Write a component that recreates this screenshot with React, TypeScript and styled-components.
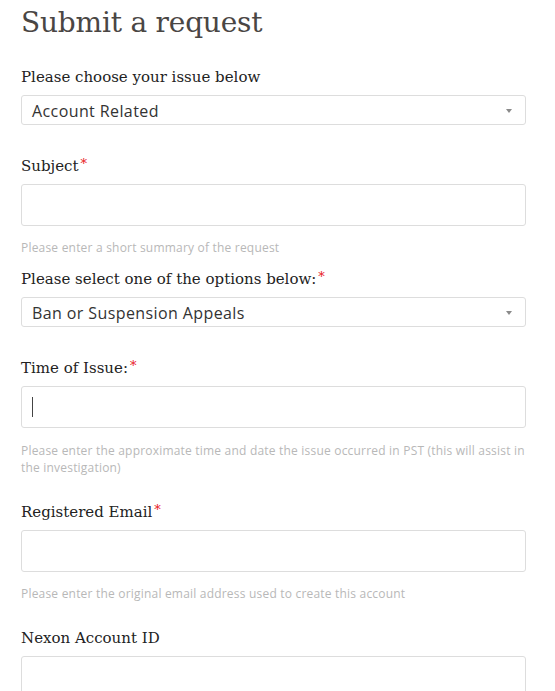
import React from "react";
import styled, { createGlobalStyle } from "styled-components";

const Global = createGlobalStyle`
  html, body { margin: 0; padding: 0; background: #fff; }
  body { font-family: "Open Sans", "Noto Sans", sans-serif; }
  * { box-sizing: border-box; }
`;

const Page = styled.div`
  padding: 0 29px 0 21px;
  width: 555px;
`;

const Title = styled.h1`
  margin: 0;
  height: 67px;
  padding-top: 4px;
  font-family: "DejaVu Serif", serif;
  font-weight: 400;
  font-size: 28px;
  line-height: 38px;
  color: #4a4644;
  letter-spacing: -0.2px;
`;

const Field = styled.div<{ $gap: number }>`
  display: flex;
  flex-direction: column;
  margin-bottom: ${(p) => p.$gap}px;
`;

const Label = styled.label`
  display: block;
  height: 20px;
  margin-bottom: 8px;
  font-family: "DejaVu Serif", serif;
  font-size: 15px;
  line-height: 20px;
  color: #222;
  letter-spacing: 0;
`;

const Req = styled.span`
  color: #e8141c;
  font-size: 13px;
  margin-left: 2px;
  position: relative;
  top: -3px;
`;

const SelectBox = styled.div`
  position: relative;
  height: 30px;
  border: 1px solid #ddd;
  border-radius: 3px;
  display: flex;
  align-items: center;
  padding: 2px 10px 0;
  font-size: 16px;
  letter-spacing: 0.4px;
  color: #333;
  background: #fff;
`;

const Arrow = styled.span`
  position: absolute;
  right: 13px;
  top: 50%;
  margin-top: -1px;
  width: 0;
  height: 0;
  border-left: 3px solid transparent;
  border-right: 3px solid transparent;
  border-top: 4px solid #8a8a8a;
`;

const InputWrap = styled.div`
  position: relative;
`;

const TextInput = styled.input`
  display: block;
  width: 100%;
  height: 42px;
  border: 1px solid #ddd;
  border-radius: 3px;
  padding: 0 10px;
  font-family: "Open Sans", sans-serif;
  font-size: 15px;
  color: #333;
  background: #fff;
  outline: none;
`;

const Caret = styled.span`
  position: absolute;
  left: 11px;
  top: 11px;
  width: 1px;
  height: 20px;
  background: #444;
`;

const Hint = styled.p<{ $top: number }>`
  margin: ${(p) => p.$top}px 0 0;
  font-size: 12px;
  letter-spacing: 0.2px;
  line-height: 17px;
  color: #b8b8b8;
`;

type F = {
  label: string;
  req?: boolean;
  kind: "select" | "input";
  value?: string;
  hint?: string;
  hintTop?: number;
  gap: number;
  caret?: boolean;
};

const fields: F[] = [
  { label: "Please choose your issue below", kind: "select", value: "Account Related", gap: 31 },
  { label: "Subject", req: true, kind: "input", hint: "Please enter a short summary of the request", hintTop: 13, gap: 13 },
  { label: "Please select one of the options below:", req: true, kind: "select", value: "Ban or Suspension Appeals", gap: 31 },
  {
    label: "Time of Issue:",
    req: true,
    kind: "input",
    caret: true,
    hint: "Please enter the approximate time and date the issue occurred in PST (this will assist in the investigation)",
    hintTop: 14,
    gap: 26,
  },
  { label: "Registered Email", req: true, kind: "input", hint: "Please enter the original email address used to create this account", hintTop: 13, gap: 26 },
  { label: "Nexon Account ID", kind: "input", gap: 0 },
];

export default function App() {
  return (
    <Page>
      <Global />
      <Title>Submit a request</Title>
      {fields.map((f) => (
        <Field key={f.label} $gap={f.gap}>
          <Label>
            {f.label}
            {f.req && <Req>*</Req>}
          </Label>
          {f.kind === "select" ? (
            <SelectBox>
              {f.value}
              <Arrow />
            </SelectBox>
          ) : (
            <InputWrap>
              <TextInput type="text" readOnly />
              {f.caret && <Caret />}
            </InputWrap>
          )}
          {f.hint && <Hint $top={f.hintTop || 12}>{f.hint}</Hint>}
        </Field>
      ))}
    </Page>
  );
}
